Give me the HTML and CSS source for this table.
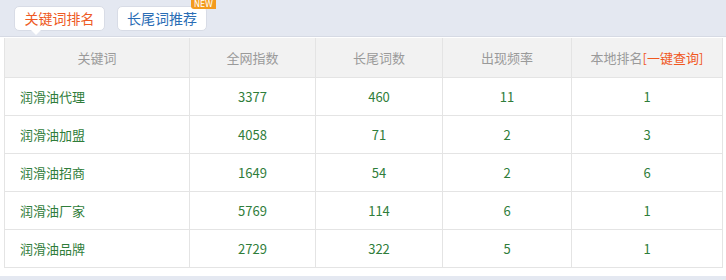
FILE: index.html
```html
<!DOCTYPE html>
<html lang="zh-CN">
<head>
<meta charset="utf-8">
<link rel="stylesheet" href="styles.css">
</head>
<body>
<div class="tabs">
  <div class="tab tab-active">关键词排名<span class="pointer"></span></div>
  <div class="tab tab-blue">长尾词推荐<span class="badge">NEW</span></div>
</div>
<div class="panel">
  <table class="grid">
    <colgroup>
      <col class="c1"><col class="c2"><col class="c3"><col class="c4"><col class="c5">
    </colgroup>
    <thead>
      <tr><th>关键词</th><th>全网指数</th><th>长尾词数</th><th>出现频率</th><th>本地排名<span class="link">[一键查询]</span></th></tr>
    </thead>
    <tbody>
      <tr><td class="kw">润滑油代理</td><td>3377</td><td>460</td><td>11</td><td>1</td></tr>
      <tr><td class="kw">润滑油加盟</td><td>4058</td><td>71</td><td>2</td><td>3</td></tr>
      <tr><td class="kw">润滑油招商</td><td>1649</td><td>54</td><td>2</td><td>6</td></tr>
      <tr><td class="kw">润滑油厂家</td><td>5769</td><td>114</td><td>6</td><td>1</td></tr>
      <tr><td class="kw">润滑油品牌</td><td>2729</td><td>322</td><td>5</td><td>1</td></tr>
    </tbody>
  </table>
</div>
<div class="footer-band"></div>
</body>
</html>
```
FILE: styles.css
```css
html, body {
  margin: 0;
  padding: 0;
  background: #ffffff;
  font-family: "Noto Sans CJK SC", "Noto Sans", sans-serif;
  font-size: 13px;
}
.tabs {
  height: 37px;
  box-sizing: border-box;
  background: #e4e8f1;
  border-bottom: 1px solid #d6dae4;
  padding: 6px 0 0 14px;
  display: flex;
  gap: 12px;
}
.tab {
  position: relative;
  height: 25px;
  box-sizing: border-box;
  width: 91px;
  background: #ffffff;
  border: 1px solid #d8dce6;
  border-radius: 5px;
  font-size: 14px;
  line-height: 23px;
  text-align: center;
}
.tab-active { color: #ee5a24; }
.tab-blue { color: #2a6db5; width: 90px; }
.pointer {
  position: absolute;
  left: 16px;
  bottom: -5px;
  width: 0;
  height: 0;
  border-left: 5px solid transparent;
  border-right: 5px solid transparent;
  border-top: 5px solid #ffffff;
}
.badge {
  position: absolute;
  right: -10px;
  top: -7px;
  background: #f39a1e;
  color: #ffffff;
  font-family: "DejaVu Sans", sans-serif;
  font-size: 8px;
  line-height: 9px;
  padding: 0 3px;
  height: 9px;
  border-radius: 0 0 0 3px;
}
.panel {
  padding: 1px 4px 0 4px;
  height: 239px;
  box-sizing: border-box;
}
.grid {
  width: 718px;
  border-collapse: collapse;
  table-layout: fixed;
}
.c1 { width: 185px; }
.c2 { width: 126px; }
.c3 { width: 127px; }
.c4 { width: 129px; }
.c5 { width: 151px; }
.grid th {
  height: 39px;
  box-sizing: border-box;
  background: #f2f2f2;
  color: #9a9a9a;
  font-weight: normal;
  font-size: 13px;
  border: 1px solid #e4e4e4;
  border-top: none;
  padding: 0;
}
.link { color: #f0581e; }
.grid td {
  height: 38px;
  box-sizing: border-box;
  text-align: center;
  color: #2f7d3a;
  border: 1px solid #e4e4e4;
  padding: 0;
  font-size: 13px;
}
.grid td.kw {
  text-align: left;
  padding-left: 15px;
}
.footer-band {
  height: 10px;
  background: #e4e8f1;
}
```
